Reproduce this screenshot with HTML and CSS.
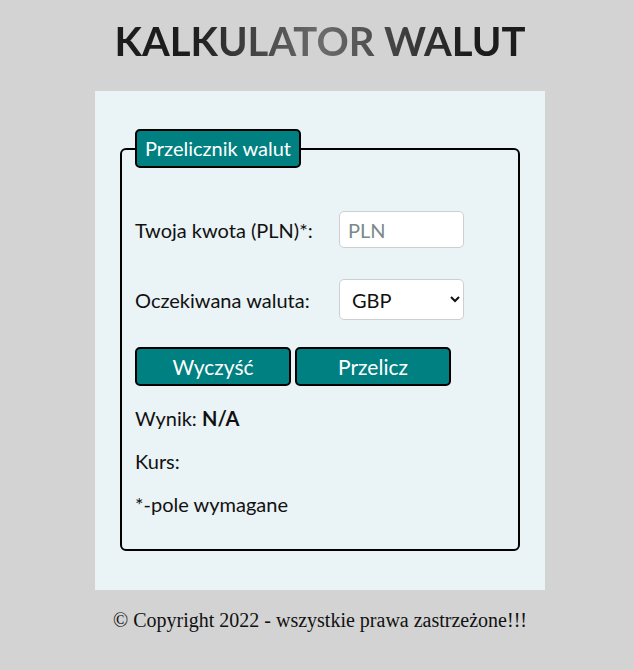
FILE: index.html
```html
<!DOCTYPE html>
<html lang="pl">
<head>
<meta charset="utf-8">
<title>Kalkulator walut</title>
<link rel="stylesheet" href="styles.css">
</head>
<body>
<h1 class="title">KALKULATOR WALUT</h1>
<main class="panel">
  <fieldset class="calc">
    <legend class="calc-legend">Przelicznik walut</legend>
    <div class="row">
      <label class="label" for="amount">Twoja kwota (PLN)*:</label>
      <input class="field" id="amount" type="text" placeholder="PLN">
    </div>
    <div class="row row-select">
      <label class="label" for="cur">Oczekiwana waluta:</label>
      <select class="field select" id="cur">
        <option>GBP</option>
        <option>EUR</option>
        <option>USD</option>
      </select>
    </div>
    <div class="buttons">
      <button class="btn" type="button">Wyczyść</button>
      <button class="btn" type="button">Przelicz</button>
    </div>
    <p class="line">Wynik: <b>N/A</b></p>
    <p class="line">Kurs:</p>
    <p class="line">*-pole wymagane</p>
  </fieldset>
</main>
<footer class="footer">© Copyright 2022 - wszystkie prawa zastrzeżone!!!</footer>
</body>
</html>
```
FILE: styles.css
```css
html, body {
  margin: 0;
  padding: 0;
}
body {
  background: #d3d3d3;
  font-family: Lato, "Liberation Sans", sans-serif;
  color: #111;
  padding-left: 6px;
}
.title {
  margin: 0 auto;
  padding-top: 17px;
  height: 75px;
  box-sizing: border-box;
  text-align: center;
  font-size: 40px;
  line-height: 48px;
  font-weight: 700;
  background: linear-gradient(90deg, #1c1c1c 18%, #6c6c6c 50%, #1c1c1c 86%);
  -webkit-background-clip: text;
  background-clip: text;
  color: transparent;
  width: fit-content;
  white-space: nowrap;
}
.panel {
  width: 450px;
  margin: 16px auto 0;
  background: #eaf3f5;
  padding: 38px 25px 39px;
  box-sizing: border-box;
}
.calc {
  margin: 0;
  border: 2px solid #000;
  border-radius: 6px;
  padding: 43px 13px 34px;
  min-width: 0;
}
.calc-legend {
  background: #008080;
  color: #fff;
  border: 2px solid #000;
  border-radius: 5px;
  font-size: 20px;
  line-height: 35px;
  padding: 0 8px;
  margin: 0;
}
.row {
  display: grid;
  grid-template-columns: 204px 125px;
  align-items: center;
  margin-bottom: 31px;
}
.row-select {
  margin-bottom: 27px;
}
.label {
  font-size: 20px;
}
.field {
  box-sizing: border-box;
  width: 125px;
  height: 37px;
  border: 1px solid #cfcfcf;
  border-radius: 5px;
  background: #fff;
  font-family: Lato, sans-serif;
  font-size: 20px;
  padding: 0 8px;
  color: #111;
  outline: none;
}
.field::placeholder {
  color: #7a8a8a;
}
.select {
  height: 41px;
  padding: 0 6px 0 8px;
}
.buttons {
  display: flex;
  gap: 4px;
}
.btn {
  width: 156px;
  height: 39px;
  background: #008080;
  color: #fff;
  border: 2px solid #000;
  border-radius: 5px;
  font-family: Lato, sans-serif;
  font-size: 21px;
  padding: 0;
}
.line {
  font-size: 20px;
  line-height: 22px;
  margin: 21px 0 0;
}
.line + .line {
  margin-top: 21px;
}
.footer {
  text-align: center;
  font-family: "Liberation Serif", serif;
  font-size: 20px;
  margin-top: 19px;
  color: #111;
}
```
